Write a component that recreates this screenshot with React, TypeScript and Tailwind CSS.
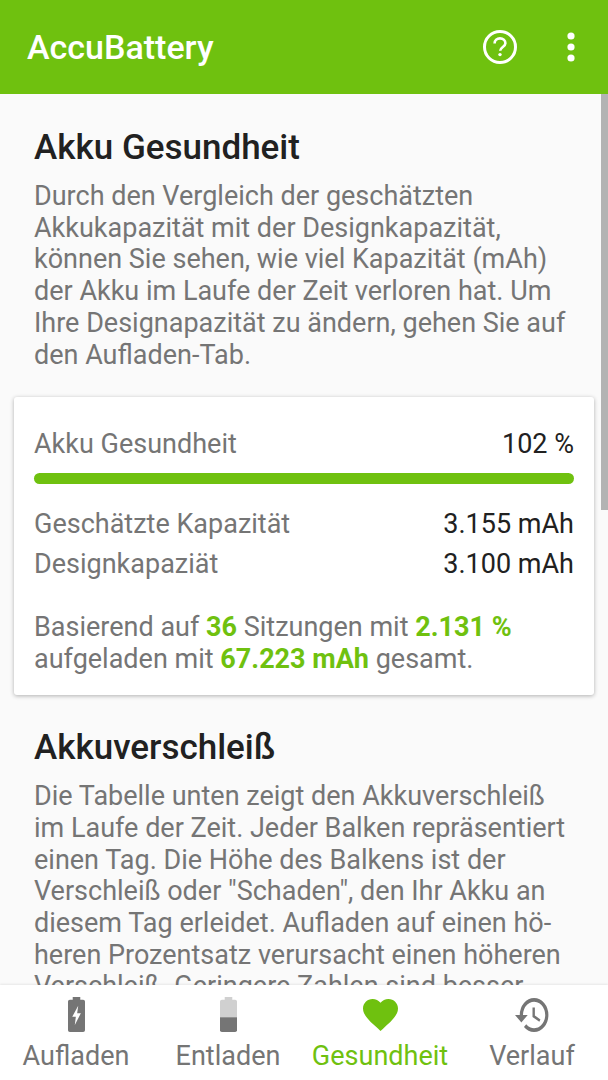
import React from "react";

const G = "text-[#6fc10f]";

function Row({ label, value }: { label: string; value: string }) {
  return (
    <div className="flex items-center justify-between h-[40px]">
      <span className="text-[#757575]">{label}</span>
      <span className="text-[#212121]">{value}</span>
    </div>
  );
}

function NavItem({ icon, label, active }: { icon: React.ReactNode; label: string; active?: boolean }) {
  return (
    <div className="flex flex-col items-center w-[152px]">
      <div className="h-[41px] w-full flex items-center justify-center">{icon}</div>
      <span className={`text-[27px] leading-[32px] mt-[5px] ${active ? "text-[#6fc10f]" : "text-[#757575]"}`}>{label}</span>
    </div>
  );
}

export default function App() {
  return (
    <div className="relative w-[608px] h-[1080px] overflow-hidden flex flex-col bg-[#fafafa] font-['Roboto',sans-serif]">
      <header className="h-[94px] shrink-0 bg-[#6fc10f] flex items-center justify-between pl-[27px] pr-[31px]">
        <h1 className="text-white text-[34px] font-medium leading-none">AccuBattery</h1>
        <div className="flex items-center gap-[47px] -mt-[1px]">
          <svg width="36" height="36" viewBox="0 0 36 36" fill="none">
            <circle cx="18" cy="18" r="15.5" stroke="white" strokeWidth="3" />
            <path d="M12.6 14.4c0-3 2.4-5 5.4-5s5.4 2 5.4 4.8c0 3.6-5.2 4-5.2 7.6" stroke="white" strokeWidth="2.6" fill="none" />
            <circle cx="18" cy="25.6" r="1.7" fill="white" />
          </svg>
          <svg width="12" height="32" viewBox="0 0 12 32" fill="white">
            <circle cx="6" cy="5" r="3.6" />
            <circle cx="6" cy="16" r="3.6" />
            <circle cx="6" cy="27" r="3.6" />
          </svg>
        </div>
      </header>

      <main className="flex-1 min-h-0 overflow-hidden text-[27px] leading-[31.7px]">
        <section className="px-[34px] pt-[34px]">
          <h2 className="text-[35px] leading-[40px] font-medium text-[#212121]">Akku Gesundheit</h2>
          <p className="mt-[13px] text-[#757575]">
            Durch den Vergleich der geschätzten
            <br />
            Akkukapazität mit der Designkapazität,
            <br />
            können Sie sehen, wie viel Kapazität (mAh)
            <br />
            der Akku im Laufe der Zeit verloren hat. Um
            <br />
            Ihre Designapazität zu ändern, gehen Sie auf
            <br />
            den Aufladen-Tab.
          </p>
        </section>

        <section className="mx-[14px] mt-[26px] h-[298px] bg-white rounded-[3px] shadow-[0_1px_4px_rgba(0,0,0,0.3)] px-[20px] pt-[28px]">
          <div className="flex items-center justify-between h-[39px]">
            <span className="text-[#757575]">Akku Gesundheit</span>
            <span className="text-[#212121]">102 %</span>
          </div>
          <div className="h-[11px] mt-[9px] rounded-full bg-[#6fc10f]" />
          <div className="mt-[21px]">
            <Row label="Geschätzte Kapazität" value="3.155 mAh" />
            <Row label="Designkapaziät" value="3.100 mAh" />
          </div>
          <p className="mt-[27px] text-[#757575]">
            Basierend auf <b className={`font-bold ${G}`}>36</b> Sitzungen mit <b className={`font-bold ${G}`}>2.131 %</b>
            <br />
            aufgeladen mit <b className={`font-bold ${G}`}>67.223 mAh</b> gesamt.
          </p>
        </section>

        <section className="px-[34px] pt-[33px]">
          <h2 className="text-[35px] leading-[40px] font-medium text-[#212121]">Akkuverschleiß</h2>
          <p className="mt-[13px] text-[#757575]">
            Die Tabelle unten zeigt den Akkuverschleiß
            <br />
            im Laufe der Zeit. Jeder Balken repräsentiert
            <br />
            einen Tag. Die Höhe des Balkens ist der
            <br />
            Verschleiß oder "Schaden", den Ihr Akku an
            <br />
            diesem Tag erleidet. Aufladen auf einen hö-
            <br />
            heren Prozentsatz verursacht einen höheren
            <br />
            Verschleiß. Geringere Zahlen sind besser.
          </p>
        </section>
      </main>

      <div className="absolute right-0 top-[94px] w-[7px] h-[416px] bg-[#b3b3b3]" />

      <nav className="h-[95px] shrink-0 bg-white flex items-start pt-[9px] relative shadow-[0_-1px_2px_rgba(0,0,0,0.08)]">
        <NavItem
          label="Aufladen"
          icon={
            <svg width="17" height="35" viewBox="0 0 18 40" preserveAspectRatio="none">
              <path d="M5 0h8v3h3a2 2 0 0 1 2 2v33a2 2 0 0 1-2 2H2a2 2 0 0 1-2-2V5a2 2 0 0 1 2-2h3z" fill="#757575" />
              <path d="M10.8 10 4.5 22.5h3.8L7.2 32l6.4-13.4H9.7z" fill="white" />
            </svg>
          }
        />
        <NavItem
          label="Entladen"
          icon={
            <svg width="17" height="35" viewBox="0 0 18 40" preserveAspectRatio="none">
              <path d="M5 0h8v3h3a2 2 0 0 1 2 2v18H0V5a2 2 0 0 1 2-2h3z" fill="#d0d0d0" />
              <path d="M0 23h18v15a2 2 0 0 1-2 2H2a2 2 0 0 1-2-2z" fill="#757575" />
            </svg>
          }
        />
        <NavItem
          label="Gesundheit"
          active
          icon={
            <svg width="35" height="32" viewBox="2 3 20 18.4" preserveAspectRatio="none">
              <path d="M12 21.35l-1.45-1.32C5.4 15.36 2 12.28 2 8.5 2 5.42 4.42 3 7.5 3c1.74 0 3.41.81 4.5 2.09C13.09 3.81 14.76 3 16.5 3 19.58 3 22 5.42 22 8.5c0 3.78-3.4 6.86-8.55 11.54L12 21.35z" fill="#6fc10f" />
            </svg>
          }
        />
        <NavItem
          label="Verlauf"
          icon={
            <svg width="35" height="34" viewBox="1 3 22 18" preserveAspectRatio="none">
              <path d="M13 3a9 9 0 0 0-9 9H1l3.89 3.89.07.14L9 12H6a7 7 0 1 1 2.05 4.95l-1.42 1.42A8.95 8.95 0 0 0 13 21a9 9 0 0 0 0-18zm-1 5v5l4.28 2.54.72-1.21-3.5-2.08V8z" fill="#757575" />
            </svg>
          }
        />
      </nav>
    </div>
  );
}
